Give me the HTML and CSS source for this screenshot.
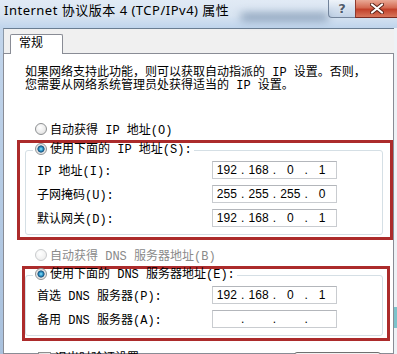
FILE: index.html
```html
<!DOCTYPE html>
<html lang="zh-CN">
<head>
    <meta charset="UTF-8">
    <meta name="viewport" content="width=device-width, initial-scale=1.0">
    <title>Internet 协议版本 4 (TCP/IPv4) 属性</title>
    <link rel="stylesheet" href="styles.css">
</head>
<body>
    <div class="titlebar">
        <span class="title">Internet 协议版本 4 (TCP/IPv4) 属性</span>
        <span class="glare"></span>
        <div class="caption-btns">
            <span class="btn-help">?</span>
            <span class="btn-close">
                <svg width="14" height="11" viewBox="0 0 14 11">
                    <path d="M2 1.5 L12 9.5 M12 1.5 L2 9.5" stroke="#5a2318" stroke-width="4" stroke-linecap="round"/>
                    <path d="M2 1.5 L12 9.5 M12 1.5 L2 9.5" stroke="#fff" stroke-width="2.2" stroke-linecap="round"/>
                </svg>
            </span>
        </div>
    </div>

    <div class="frame">
        <div class="edge-left"></div>

        <div class="client">
            <div class="tabs">
                <span class="tab">常规</span>
            </div>

            <div class="panel">
                <p class="desc">如果网络支持此功能，则可以获取自动指派的 IP 设置。否则，<br>您需要从网络系统管理员处获得适当的 IP 设置。</p>

                <div class="opt"><span class="radio"></span>自动获得 IP 地址(O)</div>

                <div class="mark mark-ip">
                    <fieldset class="group">
                        <legend><span class="radio on"></span>使用下面的 IP 地址(S):</legend>
                        <div class="row">
                            <span class="lbl">IP 地址(I):</span>
                            <span class="ip"><span class="oct">192</span><span class="dot">.</span><span class="oct">168</span><span class="dot">.</span><span class="oct">0</span><span class="dot">.</span><span class="oct">1</span></span>
                        </div>
                        <div class="row">
                            <span class="lbl">子网掩码(U):</span>
                            <span class="ip"><span class="oct">255</span><span class="dot">.</span><span class="oct">255</span><span class="dot">.</span><span class="oct">255</span><span class="dot">.</span><span class="oct">0</span></span>
                        </div>
                        <div class="row">
                            <span class="lbl">默认网关(D):</span>
                            <span class="ip"><span class="oct">192</span><span class="dot">.</span><span class="oct">168</span><span class="dot">.</span><span class="oct">0</span><span class="dot">.</span><span class="oct">1</span></span>
                        </div>
                    </fieldset>
                </div>

                <div class="opt opt-dns disabled"><span class="radio off"></span>自动获得 DNS 服务器地址(B)</div>

                <div class="mark mark-dns">
                    <fieldset class="group">
                        <legend><span class="radio on"></span>使用下面的 DNS 服务器地址(E):</legend>
                        <div class="row">
                            <span class="lbl">首选 DNS 服务器(P):</span>
                            <span class="ip"><span class="oct">192</span><span class="dot">.</span><span class="oct">168</span><span class="dot">.</span><span class="oct">0</span><span class="dot">.</span><span class="oct">1</span></span>
                        </div>
                        <div class="row">
                            <span class="lbl">备用 DNS 服务器(A):</span>
                            <span class="ip"><span class="oct"></span><span class="dot">.</span><span class="oct"></span><span class="dot">.</span><span class="oct"></span><span class="dot">.</span><span class="oct"></span></span>
                        </div>
                    </fieldset>
                </div>

                <div class="bottom">
                    <span class="check"></span>
                    <span class="check-text">退出时验证设置</span>
                    <span class="btn">高级(V)...</span>
                </div>
            </div>
        </div>

        <div class="edge-right"></div>
    </div>
</body>
</html>
```

FILE: styles.css
```css
*{
    margin: 0;
    padding: 0;
    box-sizing: border-box;
}

body{
    width: 397px;
    height: 354px;
    overflow: hidden;
    background: #c3d6ea;
    font-family: "Liberation Mono", "Noto Sans CJK SC", monospace;
    font-size: 12px;
    color: #000;
}

/* title bar */
.titlebar{
    height: 28px;
    display: flex;
    align-items: flex-start;
    background: linear-gradient(to bottom, #e1eaf5 0%, #d8e4f1 55%, #bfd4ec 100%);
}

.title{
    padding: 2px 0 0 4px;
    font-family: "Noto Sans", "Noto Sans CJK SC", sans-serif;
    font-size: 13px;
    letter-spacing: .5px;
    line-height: 17px;
    white-space: nowrap;
    color: #000;
}

.glare{
    width: 92px;
    height: 8px;
    margin: 13px 0 0 12px;
    background: #7890ad;
    filter: blur(4px);
    opacity: .8;
}

.caption-btns{
    margin-left: auto;
    display: flex;
    height: 18px;
}

.btn-help{
    width: 27px;
    border: 1px solid #72839a;
    border-top: none;
    border-right: none;
    border-radius: 0 0 0 4px;
    background: linear-gradient(to bottom, #eef3f9 0%, #d4e0ee 50%, #c2d2e6 100%);

    font-family: "DejaVu Sans", sans-serif;
    font-size: 13px;
    font-weight: bold;
    line-height: 17px;
    text-align: center;
    color: #4f5b6b;
    text-shadow: 0 0 2px #fff;
}

.btn-close{
    width: 42px;
    display: flex;
    align-items: center;
    justify-content: center;
    border-bottom: 1px solid #7a2a20;
    border-left: 1px solid #8e3a2e;
    background: linear-gradient(to bottom, #e9a996 0%, #d46a52 45%, #c2412a 55%, #d8765c 100%);
}

/* window frame */
.frame{
    display: flex;
    height: 326px;
}

.edge-left{
    width: 3px;
    background: linear-gradient(to bottom, #c2d5eb, #a9c1dd);
}

.edge-right{
    width: 3px;
    background: linear-gradient(to bottom, #eef2f6 0, #eef2f6 279px, #7cc3cb 279px, #7cc3cb 300px, #eef2f6 300px);
}

.client{
    flex: 1;
    background: #f0f0f0;
}

.tabs{
    height: 25px;
    display: flex;
    padding: 5px 0 0 6px;
    border-top: 1px solid #6a7d92;
    border-left: 1px solid #8c99a8;
}

.tab{
    position: relative;
    z-index: 1;
    width: 53px;
    height: 20px;
    padding: 2px 0 0 8px;
    background: #fff;
    border: 1px solid #898c95;
    border-bottom: none;
    border-radius: 2px 2px 0 0;
    line-height: 14px;
}

.panel{
    height: 301px;
    background: #fff;
    border: 1px solid #898c95;
}

.desc{
    padding: 13px 0 0 21px;
    line-height: 13px;
    white-space: nowrap;
}

.opt{
    height: 14px;
    margin-top: 29px;
    padding-left: 31px;
    display: flex;
    align-items: center;
    white-space: nowrap;
}

.opt-dns{
    margin-top: 8px;
}

.disabled{
    color: #8a8a8a;
}

.radio{
    display: inline-block;
    width: 12px;
    height: 12px;
    margin-right: 3px;
    border-radius: 50%;
    border: 1px solid #8e9193;
    background: radial-gradient(circle at 40% 35%, #ffffff 0, #ececec 55%, #d2d2d2 100%);
    vertical-align: -2px;
}

.radio.on{
    background: radial-gradient(circle at 50% 50%, #9be4f8 0, #3aa6d6 1.5px, #15507c 3.2px, #e4e4e4 3.9px, #f6f6f6 100%);
}

.radio.off{
    border-color: #c9cbcd;
    background: radial-gradient(circle at 40% 35%, #ffffff 0, #f2f2f2 60%, #e6e6e6 100%);
}

/* red marks */
.mark{
    margin-top: 4px;
    border: 3px solid #ac2b2b;
}

.mark-ip{
    width: 376px;
    margin-left: 13px;
}

.mark-dns{
    width: 368px;
    margin-left: 18px;
}

.group{
    min-width: 0;
    padding: 4px 0 7px 0;
    border: 1px solid #d5dfe5;
    border-radius: 3px;
}

.mark-ip .group{
    margin: 0 7px 2px 5px;
}

.mark-dns .group{
    margin: -1px 4px 2px 0;
}

.group legend{
    margin-left: 7px;
    padding: 0 2px;
    line-height: 14px;
    white-space: nowrap;
}

.row{
    height: 18px;
    display: flex;
    align-items: center;
    padding-left: 11px;
    white-space: nowrap;
}

.row + .row{
    margin-top: 6px;
}

.lbl{
    width: 175px;
}

.ip{
    width: 125px;
    height: 18px;
    display: flex;
    align-items: center;
    border: 1px solid #c9ccd0;
    border-top-color: #b3b6bb;

    font-family: "Liberation Sans", sans-serif;
    font-size: 12px;
}

.oct{
    flex: 1;
    text-align: center;
}

.dot{
    width: 4px;
    text-align: center;
}

/* bottom row, cut by the window like in the screenshot */
.bottom{
    margin-top: 11px;
    padding: 0 12px 0 34px;
    display: flex;
    align-items: flex-start;
}

.check{
    width: 13px;
    height: 13px;
    border: 1px solid #8e8f8f;
    background: linear-gradient(135deg, #dcdcdc, #fbfbfb);
}

.check-text{
    margin-left: 4px;
    line-height: 14px;
}

.btn{
    margin-left: auto;
    width: 87px;
    height: 23px;
    border: 1px solid #707070;
    border-radius: 3px;
    background: linear-gradient(to bottom, #f2f2f2, #dcdcdc);
    text-align: center;
    line-height: 21px;
}
```
